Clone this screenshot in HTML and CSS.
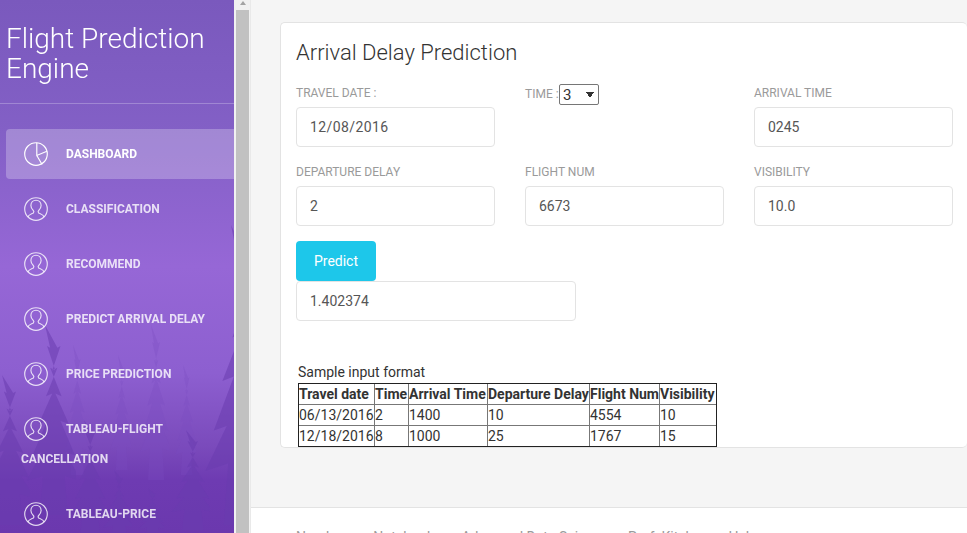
FILE: index.html
```html
<!DOCTYPE html>
<html lang="en">
  <head>
    <meta charset="UTF-8" />
    <title>Flight Prediction Engine</title>
    <link rel="stylesheet" href="styles.css">
  </head>
  <body>
    <svg class="icon-defs" width="0" height="0">
      <symbol id="icon-user" viewBox="0 0 24 24">
        <circle cx="12" cy="12" r="11.3" />
        <path d="M3.800 20c.6-2.200 4-3.200 5.600-4.100.7-.9.600-1.700-.1-2.400-1.500-1.400-2.400-3.200-2.400-5C6.900 5.400 9.100 3.200 12 3.200s5.100 2.200 5.100 5.300c0 1.800-.9 3.600-2.400 5-.7.700-.8 1.500-.1 2.400 1.600.9 5 1.900 5.600 4.100" />
      </symbol>
      <symbol id="icon-chart" viewBox="0 0 24 24">
        <circle cx="12" cy="12" r="11.300" />
        <path d="M12.800.8v12.700l10.100-4.300M12.800 13.500l5.300 9" />
      </symbol>
      <symbol id="tree" viewBox="0 0 60 200" preserveAspectRatio="none">
        <path d="M30 0l5 24-3-2 8 26-5-3 11 30-6-3 13 32-8-3 14 36-9-3 15 30-16-5 3 41H25l3-41-16 5 15-30-9 3 14-36-8 3 13-32-6 3 11-30-5 3 8-26-3 2z" />
      </symbol>
    </svg>

    <div class="layout">
      <aside class="sidebar">
        <svg class="forest" viewBox="0 0 234 533" preserveAspectRatio="none" width="234" height="533">
          <g class="trees-far">
            <use href="#tree" x="58" y="345" width="30" height="130" />
            <use href="#tree" x="133" y="325" width="36" height="155" />
            <use href="#tree" x="105" y="355" width="26" height="115" />
            <use href="#tree" x="170" y="365" width="26" height="110" />
          </g>
          <g class="trees-near">
            <use href="#tree" x="14" y="325" width="62" height="190" />
            <use href="#tree" x="-26" y="375" width="56" height="150" />
            <use href="#tree" x="188" y="225" width="86" height="300" />
            <use href="#tree" x="162" y="430" width="48" height="100" />
            <use href="#tree" x="62" y="420" width="44" height="115" />
            <use href="#tree" x="96" y="470" width="36" height="70" />
            <use href="#tree" x="132" y="488" width="32" height="50" />
          </g>
        </svg>
        <div class="sidebar-inner">
          <h1 class="brand">Flight Prediction Engine</h1>
          <ul class="nav">
            <li class="active"><a href="#"><svg class="nav-icon"><use href="#icon-chart" /></svg>Dashboard</a></li>
            <li><a href="#"><svg class="nav-icon"><use href="#icon-user" /></svg>Classification</a></li>
            <li><a href="#"><svg class="nav-icon"><use href="#icon-user" /></svg>Recommend</a></li>
            <li><a href="#"><svg class="nav-icon"><use href="#icon-user" /></svg>Predict Arrival Delay</a></li>
            <li><a href="#"><svg class="nav-icon"><use href="#icon-user" /></svg>Price Prediction</a></li>
            <li><a href="#"><svg class="nav-icon"><use href="#icon-user" /></svg>Tableau-Flight Cancellation</a></li>
            <li><a href="#"><svg class="nav-icon"><use href="#icon-user" /></svg>Tableau-Price</a></li>
          </ul>
        </div>
      </aside>

      <div class="side-scroll">
        <span class="side-scroll-arrow"></span>
        <span class="side-scroll-thumb"></span>
      </div>

      <div class="main">
        <div class="content">
          <div class="card">
            <h4 class="card-title">Arrival Delay Prediction</h4>
            <form class="form-grid">
              <div class="field">
                <label>Travel Date :</label>
                <input type="text" class="form-control date-input" value="12/08/2016" />
              </div>
              <div class="field field-inline">
                <label>Time :</label>
                <select class="time-select">
                  <option>3</option>
                </select>
              </div>
              <div class="field">
                <label>Arrival Time</label>
                <input type="text" class="form-control" value="0245" />
              </div>
              <div class="field">
                <label>Departure Delay</label>
                <input type="text" class="form-control" value="2" />
              </div>
              <div class="field">
                <label>Flight Num</label>
                <input type="text" class="form-control" value="6673" />
              </div>
              <div class="field">
                <label>Visibility</label>
                <input type="text" class="form-control" value="10.0" />
              </div>
            </form>
            <button type="button" class="btn-predict">Predict</button>
            <input type="text" class="form-control result" value="1.402374" />
            <p class="sample-title">Sample input format</p>
            <table class="sample-table">
              <tr>
                <th>Travel date</th><th>Time</th><th>Arrival Time</th><th>Departure Delay</th><th>Flight Num</th><th>Visibility</th>
              </tr>
              <tr>
                <td>06/13/2016</td><td>2</td><td>1400</td><td>10</td><td>4554</td><td>10</td>
              </tr>
              <tr>
                <td>12/18/2016</td><td>8</td><td>1000</td><td>25</td><td>1767</td><td>15</td>
              </tr>
            </table>
          </div>
        </div>
        <footer class="footer">
          <a href="#">Numbers</a>
          <a href="#">Notebooks</a>
          <a href="#">Advanced Data Science</a>
          <a href="#">Prof. Kitchen</a>
          <a href="#">Help</a>
        </footer>
      </div>
    </div>
  </body>
</html>
```

FILE: styles.css
```css
* {
  box-sizing: border-box;
}
html,
body {
  height: 100%;
}
body {
  margin: 0;
  overflow: hidden;
  font-family: Roboto, "Liberation Sans", sans-serif;
  font-size: 14px;
  color: #333;
  background-color: #f5f5f5;
}
.icon-defs {
  display: block;
  height: 0;
}
.layout {
  display: flex;
  height: 533px;
}

/* sidebar */
.sidebar {
  position: relative;
  flex: 0 0 234px;
  overflow: hidden;
  background: linear-gradient(180deg, #7a59bd 0%, #8360c6 25%, #9667d6 50%, #8d5fd0 70%, #7a4abb 84%, #6e3bb2 90%, #6b38ae 100%);
}
.forest {
  position: absolute;
  top: 0;
  left: 0;
  filter: blur(0.6px);
}
.trees-far {
  fill: #7a4cc0;
  opacity: 0.3;
}
.trees-near {
  fill: #6a3cb0;
  opacity: 0.55;
}
.sidebar-inner {
  position: relative;
}
.brand {
  margin: 0;
  padding: 24px 6px 0;
  height: 104px;
  font-size: 28px;
  font-weight: 300;
  line-height: 30px;
  color: #fff;
  border-bottom: 1px solid rgba(255, 255, 255, 0.25);
}
.nav {
  list-style: none;
  margin: 0;
  padding: 25px 0 0;
}
.nav li {
  margin: 0 0 5px 6px;
}
.nav a {
  display: block;
  padding: 10px 15px;
  font-size: 12px;
  font-weight: 700;
  line-height: 30px;
  text-transform: uppercase;
  text-decoration: none;
  color: rgba(255, 255, 255, 0.8);
}
.nav .active a {
  color: #fff;
  background-color: rgba(255, 255, 255, 0.25);
  border-radius: 4px 0 0 4px;
}
.nav-icon {
  float: left;
  width: 30px;
  height: 30px;
  margin-right: 15px;
  padding: 3px;
  fill: none;
  stroke: currentColor;
  stroke-width: 1.150;
}

/* the sidebar's own scrollbar */
.side-scroll {
  position: relative;
  flex: 0 0 16px;
  background-color: #f1f1f1;
}
.side-scroll-arrow {
  position: absolute;
  top: 1px;
  left: 6px;
  border-left: 3.500px solid transparent;
  border-right: 3.500px solid transparent;
  border-bottom: 4px solid #a3a3a3;
}
.side-scroll-thumb {
  position: absolute;
  top: 10px;
  bottom: 0;
  left: 2px;
  width: 13px;
  background-color: #c1c1c1;
}

/* main panel */
.main {
  flex: 1;
  min-width: 0;
  display: flex;
  flex-direction: column;
  border-left: 1px solid #e9e9e9;
}
.content {
  height: 507px;
  flex: none;
  padding: 22px 0 0 29px;
}
.card {
  height: 426px;
  padding: 15px 15px 0;
  background-color: #fff;
  border: 1px solid #e3e3e3;
  border-right: 0;
  border-radius: 5px;
}
.card-title {
  margin: 0 0 17px;
  font-size: 22px;
  font-weight: 300;
  line-height: 30px;
  color: #333;
}
.form-grid {
  display: grid;
  grid-template-columns: repeat(3, 229px);
  row-gap: 17px;
}
.field {
  width: 199px;
}
.field label {
  display: block;
  margin-bottom: 5px;
  font-size: 12px;
  line-height: 17px;
  text-transform: uppercase;
  color: #9a9a9a;
}
.field-inline {
  display: flex;
  align-items: center;
  height: 21px;
  margin-top: -1px;
}
.field-inline label {
  flex: 0 0 34px;
  margin: 0;
  white-space: nowrap;
}
.time-select {
  appearance: none;
  width: 40px;
  height: 21px;
  padding: 0 0 0 3px;
  font-family: Roboto, sans-serif;
  font-size: 15px;
  color: #333;
  background-color: #fff;
  background-image: linear-gradient(to top right, transparent 50%, #333 50%), linear-gradient(to top left, transparent 50%, #333 50%);
  background-size: 4px 6px, 4px 6px;
  background-position: 26px 7px, 30px 7px;
  background-repeat: no-repeat;
  border: 1px solid #767676;
  border-radius: 2px;
}
.form-control {
  display: block;
  width: 100%;
  height: 40px;
  padding: 8px 13px;
  font-family: Roboto, sans-serif;
  font-size: 14px;
  color: #565656;
  background-color: #fff;
  border: 1px solid #e3e3e3;
  border-radius: 4px;
}
.date-input {
  letter-spacing: 0.4px;
}
.btn-predict {
  display: block;
  width: 80px;
  height: 40px;
  margin-top: 15px;
  padding: 0;
  font-family: Roboto, sans-serif;
  font-size: 14px;
  color: #fff;
  background-color: #1dc7ea;
  border: 0;
  border-radius: 4px;
}
.result {
  width: 280px;
}
.sample-title {
  margin: 41px 0 1px 2px;
  line-height: 20px;
  color: #333;
}
.sample-table {
  table-layout: fixed;
  width: 418px;
  margin-left: 2px;
  border-collapse: collapse;
  line-height: 20px;
  outline: 1px solid #222;
  outline-offset: -1px;
}
.sample-table th,
.sample-table td {
  padding: 0;
  border: 1px solid #777;
  text-align: left;
  white-space: nowrap;
}
.sample-table th {
  font-weight: 700;
}
.sample-table th:nth-child(1) {
  width: 76px;
}
.sample-table th:nth-child(2) {
  width: 34px;
}
.sample-table th:nth-child(3) {
  width: 79px;
}
.sample-table th:nth-child(4) {
  width: 102px;
}
.sample-table th:nth-child(5) {
  width: 70px;
}
.sample-table th:nth-child(6) {
  width: 57px;
}

/* footer */
.footer {
  flex: 1;
  display: flex;
  gap: 20px;
  padding: 19px 0 0 45px;
  background-color: #fff;
  border-top: 1px solid #e3e3e3;
}
.footer a {
  color: #9a9a9a;
  text-decoration: none;
  line-height: 20px;
}
```
